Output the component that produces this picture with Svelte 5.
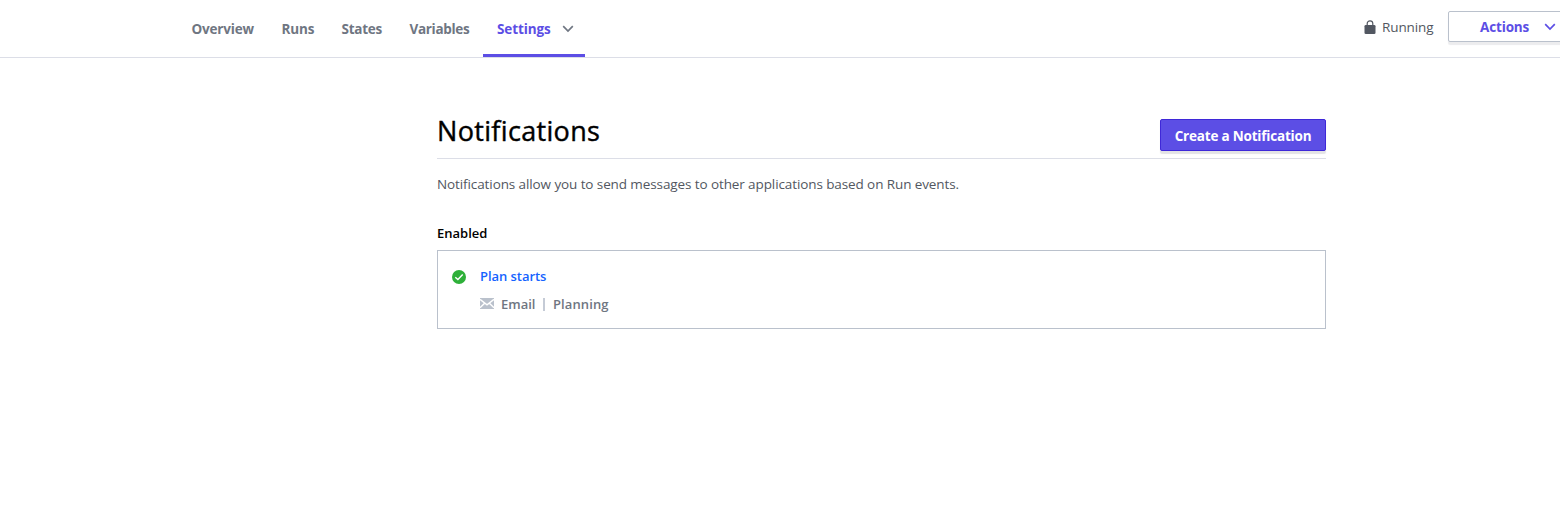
<script>
  const tabs = [
    { label: 'Overview', width: 90, spacing: -0.2 },
    { label: 'Runs', width: 60, spacing: -0.1 },
    { label: 'States', width: 68, spacing: -0.25 },
    { label: 'Variables', width: 88, spacing: -0.32 },
  ];
</script>

<header>
  <nav>
    {#each tabs as tab}
      <a class="tab" href="#top" style="width: {tab.width}px; letter-spacing: {tab.spacing}px">{tab.label}</a>
    {/each}
    <a class="tab active" href="#top">
      <span>Settings</span>
      <svg width="12" height="8" viewBox="0 0 12 8"><path d="M1.2 1.2 6 6l4.8-4.8" fill="none" stroke="#6f7682" stroke-width="1.7" /></svg>
    </a>
  </nav>
  <div class="status">
    <svg width="12" height="14" viewBox="0 0 12 14">
      <path d="M3.2 5.5V3.6a2.8 2.8 0 0 1 5.6 0v1.9" fill="none" stroke="#525761" stroke-width="1.2" />
      <rect x="0.5" y="5" width="11" height="9" rx="1.3" fill="#525761" />
    </svg>
    <span>Running</span>
  </div>
  <button class="actions">
    <span>Actions</span>
    <svg width="12" height="8" viewBox="0 0 12 8"><path d="M1.2 1.2 6 6l4.8-4.8" fill="none" stroke="#5c4ee5" stroke-width="1.7" /></svg>
  </button>
</header>

<main>
  <div class="heading">
    <h1>Notifications</h1>
    <button class="create">Create a Notification</button>
  </div>
  <p>Notifications allow you to send messages to other applications based on Run events.</p>
  <h2>Enabled</h2>
  <section class="card">
    <svg class="check" width="14" height="14" viewBox="0 0 14 14">
      <circle cx="7" cy="7" r="7" fill="#2eb039" />
      <path d="M3.3 7.2 5.9 9.6l4.8-5" fill="none" stroke="#fff" stroke-width="1.4" />
    </svg>
    <div class="details">
      <a class="name" href="#top">Plan starts</a>
      <div class="meta">
        <svg width="14" height="11" viewBox="0 0 14 11">
          <rect width="14" height="11" fill="#bac1cc" />
          <path d="M0 1.4 7 6.9l7-5.5M0 9.8l4.6-4.5M14 9.8 9.4 5.3" fill="none" stroke="#fff" stroke-width="1.4" />
        </svg>
        <span class="kind">Email</span>
        <i></i>
        <span class="trigger">Planning</span>
      </div>
    </div>
  </section>
</main>

<style>
  :global(body) {
    background: #fff;
    overflow: hidden;
    font-family: "Open Sans", "Noto Sans", sans-serif;
  }
  a { text-decoration: none; }
  svg { display: block; flex: none; }
  button { font-family: inherit; box-sizing: border-box; }
  header {
    box-sizing: border-box;
    height: 58px;
    border-bottom: 1px solid #dcdee7;
    padding-left: 177.5px;
    display: flex;
    align-items: flex-start;
    overflow: hidden;
    white-space: nowrap;
  }
  nav { display: flex; }
  .tab {
    box-sizing: border-box;
    height: 57px;
    padding: 19px 0 0 14px;
    font-size: 13.5px;
    line-height: 20px;
    font-weight: 700;
    color: #6f7682;
  }
  .active {
    width: 102px;
    margin-left: -0.5px;
    display: flex;
    color: #5c4ee5;
    border-bottom: 3px solid #5c4ee5;
    letter-spacing: -0.12px;
  }
  .active span { width: 64.5px; }
  .active svg { margin-top: 6px; }
  .status {
    display: flex;
    margin-left: 779px;
    height: 20px;
    padding-top: 17px;
    font-size: 13.5px;
    line-height: 20px;
    color: #525761;
  }
  .status svg { margin-top: 3px; }
  .status span { width: 66px; margin-left: 6px; letter-spacing: -0.1px; }
  .actions {
    flex: none;
    width: 132px;
    height: 31px;
    margin-top: 11px;
    padding: 0 0 0 31px;
    display: flex;
    align-items: center;
    border: 1px solid #bac1cc;
    border-radius: 2px;
    background: #fff;
    box-shadow: 0 3px 1px #ececee;
    color: #5c4ee5;
    font-size: 13.5px;
    font-weight: 700;
    letter-spacing: -0.15px;
  }
  .actions span { width: 63.5px; text-align: left; }
  main { width: 889px; margin-left: 437px; padding-top: 61px; }
  .heading {
    display: flex;
    justify-content: space-between;
    height: 39px;
    border-bottom: 1px solid #dcdee7;
  }
  h1 {
    margin: -6px 0 0;
    font-size: 27px;
    line-height: 36px;
    font-weight: 500;
    letter-spacing: 0.33px;
    -webkit-text-stroke: 0.4px #000;
    color: #000;
  }
  .create {
    width: 166px;
    height: 32px;
    padding: 2px 0 0;
    border: 1px solid #3f28d8;
    border-radius: 2px;
    background: #5c4ee5;
    color: #fff;
    font-size: 13.5px;
    font-weight: 700;
    letter-spacing: -0.2px;
    box-shadow: 0 3px 1px #e3e3e5;
    white-space: nowrap;
  }
  p {
    margin: 15px 0 0;
    font-size: 13.5px;
    line-height: 20px;
    color: #525761;
    white-space: nowrap;
    letter-spacing: -0.1px;
  }
  h2 {
    margin: 29px 0 7px;
    font-size: 13px;
    line-height: 20px;
    font-weight: 600;
    color: #000;
  }
  .card {
    box-sizing: border-box;
    height: 79px;
    border: 1px solid #bac1cc;
    padding: 15px 14px 0;
    display: flex;
  }
  .check { margin: 4px 14px 0 0; }
  .name {
    display: block;
    font-size: 13px;
    line-height: 20px;
    font-weight: 600;
    letter-spacing: -0.05px;
    color: #1563ff;
  }
  .meta {
    display: flex;
    align-items: center;
    height: 20px;
    margin-top: 8px;
    font-size: 13px;
    line-height: 20px;
    font-weight: 600;
    color: #6f7682;
  }
  .meta svg { margin-top: -1px; }
  .kind { width: 42px; margin-left: 7px; }
  .trigger { letter-spacing: 0.1px; }
  .meta i { width: 2px; height: 13px; background: #c5cbd6; margin-right: 8px; }
</style>
